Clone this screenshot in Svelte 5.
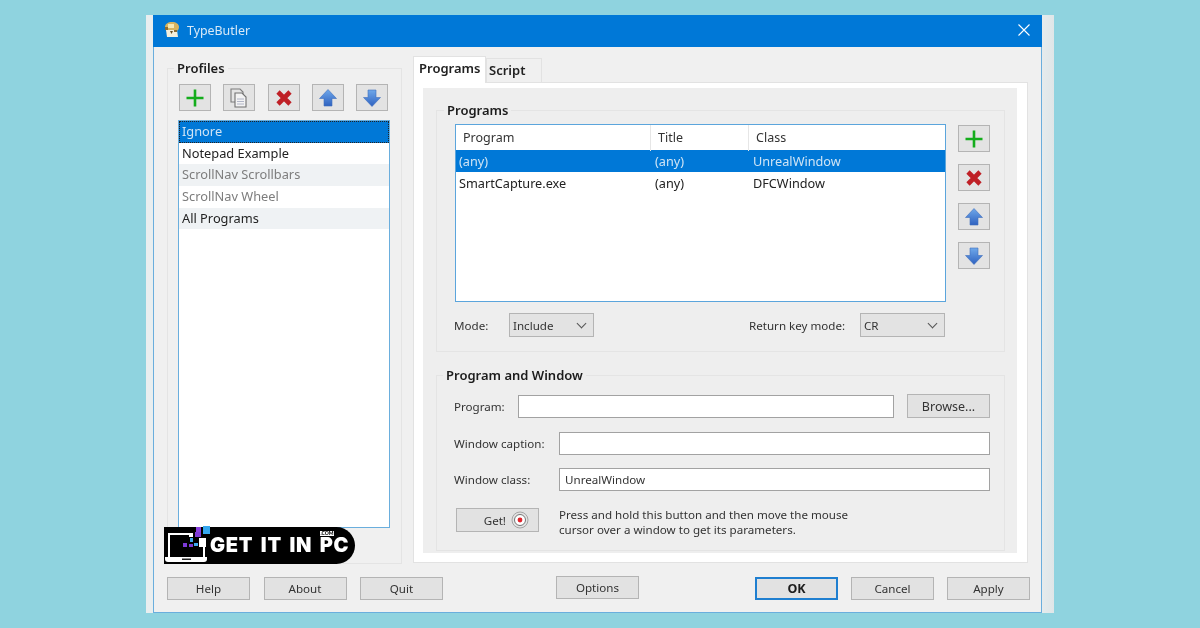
<script lang="ts">
  // TypeButler settings dialog
  const profiles = [
    { name: 'Ignore', state: 'selected' },
    { name: 'Notepad Example', state: '' },
    { name: 'ScrollNav Scrollbars', state: 'muted alt' },
    { name: 'ScrollNav Wheel', state: 'muted' },
    { name: 'All Programs', state: 'alt' }
  ];

  const programs = [
    { program: '(any)', title: '(any)', cls: 'UnrealWindow', selected: true },
    { program: 'SmartCapture.exe', title: '(any)', cls: 'DFCWindow', selected: false }
  ];

  const profileTools = ['add', 'copy', 'remove', 'up', 'down'];
  const programTools = ['add', 'remove', 'up', 'down'];
</script>

{#snippet icon(kind: string)}
  <svg class="icon" viewBox="0 0 20 20" aria-hidden="true">
    {#if kind === 'add'}
      <path d="M10 1.500v17M1.500 10h17" stroke="#14ad1c" stroke-width="2.600" fill="none" />
    {:else if kind === 'copy'}
      <path d="M2 1h9l3 3v10H2z" fill="#e4e4e4" stroke="#7c7c7c" stroke-width="1.100" />
      <path d="M6 5h7l4 4v10H6z" fill="#f3f3f3" stroke="#707070" stroke-width="1.100" />
      <path d="M8 11h7M8 13.500h7M8 16h7" stroke="#b0b4c6" />
    {:else if kind === 'remove'}
      <path d="M4 4l12 12M16 4L4 16" stroke="#bf2026" stroke-width="4.600" fill="none" />
    {:else if kind === 'up'}
      <path d="M10 1.500L18.500 10.500H14V18H6V10.500H1.500z" fill="url(#arrow-fill)" stroke="#3f6fbe" stroke-width=".6" stroke-linejoin="round" />
    {:else if kind === 'down'}
      <path d="M10 18.500L18.500 9.500H14V2H6v7.500H1.500z" fill="url(#arrow-fill)" stroke="#3f6fbe" stroke-width=".6" stroke-linejoin="round" />
    {/if}
  </svg>
{/snippet}

<svg class="defs" aria-hidden="true">
  <defs>
    <linearGradient id="arrow-fill" x1="0" y1="0" x2="0" y2="1">
      <stop offset="0" stop-color="#6fa8ea" />
      <stop offset="1" stop-color="#2f62c0" />
    </linearGradient>
  </defs>
</svg>

<div class="page">
  <div class="shell">
    <div class="window">
      <header class="titlebar">
        <svg class="app-icon" viewBox="0 0 18 18" aria-hidden="true">
          <path d="M2 6c0-3 3-5 7-5s7 2 7 5-2 4-3 4H5C3 10 2 8 2 6z" fill="#d8b45e" />
          <path d="M3 9h11l1 7H4z" fill="#f4eedc" />
          <path d="M5 3h6v4H5z" fill="#f6e9b4" />
          <path d="M2 6h3v3H2zM11 9h3v2h-3z" fill="#8b6b33" />
          <path d="M7 10h3l-1.500 3z" fill="#6b5228" />
        </svg>
        <span class="title">TypeButler</span>
        <svg class="close" viewBox="0 0 12 12" aria-hidden="true">
          <path d="M.5.500l11 11M11.500.500l-11 11" stroke="#fff" stroke-width="1.100" fill="none" />
        </svg>
      </header>

      <div class="body">
        <fieldset class="group profiles">
          <legend>Profiles</legend>
          <div class="toolbar">
            {#each profileTools as tool}
              <button type="button" class="tool">{@render icon(tool)}</button>
            {/each}
          </div>
          <ul class="list">
            {#each profiles as p}
              <li class={p.state}><span>{p.name}</span></li>
            {/each}
          </ul>
        </fieldset>

        <section class="tabs">
          <div class="tabstrip">
            <span class="tab active">Programs</span>
            <span class="tab">Script</span>
          </div>
          <div class="panel">
            <div class="panel-inner">
              <fieldset class="group programs">
                <legend>Programs</legend>
                <div class="table-row">
                  <div class="table">
                    <div class="row head">
                      <span>Program</span><span>Title</span><span>Class</span>
                    </div>
                    {#each programs as r}
                      <div class="row" class:selected={r.selected}>
                        <span>{r.program}</span><span>{r.title}</span><span>{r.cls}</span>
                      </div>
                    {/each}
                  </div>
                  <div class="side-tools">
                    {#each programTools as tool}
                      <button type="button" class="tool">{@render icon(tool)}</button>
                    {/each}
                  </div>
                </div>
                <div class="mode-row">
                  <span class="mode-label">Mode:</span>
                  <div class="select">Include<i class="chev"></i></div>
                  <span class="return-label">Return key mode:</span>
                  <div class="select">CR<i class="chev"></i></div>
                </div>
              </fieldset>

              <fieldset class="group pw">
                <legend>Program and Window</legend>
                <div class="field first">
                  <span class="short">Program:</span>
                  <div class="input grow"></div>
                  <button type="button" class="btn browse">Browse...</button>
                </div>
                <div class="field caption">
                  <span class="long">Window caption:</span>
                  <div class="input grow"></div>
                </div>
                <div class="field cls">
                  <span class="long">Window class:</span>
                  <div class="input grow">UnrealWindow</div>
                </div>
                <div class="field get">
                  <button type="button" class="btn get-btn">
                    Get!
                    <svg class="target" viewBox="0 0 18 18" aria-hidden="true">
                      <circle cx="9" cy="9" r="8" fill="none" stroke="#a5a5a5" />
                      <circle cx="9" cy="9" r="5.500" fill="#fff" stroke="#777" />
                      <circle cx="9" cy="9" r="2.400" fill="#e0242c" />
                    </svg>
                  </button>
                  <p class="hint">Press and hold this button and then move the mouse<br />cursor over a window to get its parameters.</p>
                </div>
              </fieldset>
            </div>
          </div>
        </section>

        <div class="badge">
          <i class="px blue"></i><i class="px purple"></i>
          <svg class="laptop" viewBox="0 0 43 30" aria-hidden="true">
            <path d="M3 1h22v2H5v22h33V15h2v11H3z" fill="#fff" />
            <path d="M0 25h42v2c0 2-1 3-3 3H3c-2 0-3-1-3-3z" fill="#fff" />
            <path d="M17 26.500h9v1.500h-9z" fill="#222" />
            <path d="M18 11h4v4h-4zM24 12h4v3h-4zM30 0h6v5h-6z" fill="#7c3ad6" />
            <path d="M25 6h3v4h-3zM29 11h4v3h-4z" fill="#3fa9ef" />
            <path d="M24 1h4v4h-4zM34 6h7v9h-7z" fill="#fff" />
          </svg>
          <span class="brand">GET IT IN PC</span>
          <span class="com">.COM</span>
        </div>
      </div>

      <footer class="footer">
        <div class="cluster left">
          <button type="button" class="btn">Help</button>
          <button type="button" class="btn">About</button>
          <button type="button" class="btn">Quit</button>
        </div>
        <button type="button" class="btn options">Options</button>
        <div class="cluster">
          <button type="button" class="btn ok">OK</button>
          <button type="button" class="btn">Cancel</button>
          <button type="button" class="btn">Apply</button>
        </div>
      </footer>
    </div>
  </div>
</div>

<style>
  :global(body) {
    margin: 0;
    background: #8fd3df;
  }

  .defs {
    position: absolute;
    width: 0;
    height: 0;
  }

  .page {
    height: 628px;
    box-sizing: border-box;
    padding: 15px 146px 0;
    font-family: 'Noto Sans', 'Open Sans', sans-serif;
    font-size: 11.6px;
    color: #333;
    overflow: hidden;
  }

  .shell {
    width: 908px;
    height: 598px;
    box-sizing: border-box;
    padding-left: 7px;
    background: linear-gradient(90deg, #e9eeef 0, #e9eeef 98%, #dfe6e8 100%);
  }

  .window {
    width: 889px;
    height: 598px;
    box-sizing: border-box;
    display: flex;
    flex-direction: column;
    background: #f0f0f0;
    border: 1px solid #6aaedd;
    border-top: 0;
    filter: blur(0.4px);
  }

  .titlebar {
    height: 32px;
    box-sizing: border-box;
    flex: none;
    display: flex;
    align-items: center;
    background: #0078d7;
    margin: 0 -1px;
    padding: 0 12px 2px 10px;
  }

  .app-icon {
    width: 18px;
    height: 18px;
    margin-right: 6px;
  }

  .title {
    font-size: 12.4px;
    color: #d8e9f7;
  }

  .close {
    width: 12px;
    height: 12px;
    margin-left: auto;
  }

  .body {
    position: relative;
    display: flex;
    gap: 11px;
    padding: 13px 13px 0;
    height: 517px;
    box-sizing: border-box;
  }

  .group {
    margin: 0;
    min-width: 0;
    box-sizing: border-box;
    border: 1px solid #e4e4e4;
  }

  legend {
    padding: 0 3px;
    margin-left: -11px;
    line-height: 16px;
    font-size: 13px;
    font-weight: 600;
    color: #1c1c1c;
  }

  .profiles {
    width: 235px;
    height: 504px;
    padding: 8px 12px 36px 10px;
  }

  .profiles legend {
    margin-left: -4px;
  }

  .toolbar {
    display: flex;
    justify-content: space-between;
    width: 209px;
    margin-left: 1px;
  }

  .tool {
    width: 32px;
    height: 27px;
    padding: 0;
    display: grid;
    place-items: center;
    background: #e3e3e3;
    border: 1px solid #b4b4b4;
  }

  .icon {
    width: 20px;
    height: 20px;
  }

  .list {
    list-style: none;
    margin: 9px 0 0;
    padding: 0;
    width: 212px;
    height: 408px;
    box-sizing: border-box;
    font-size: 12.8px;
    background: #fff;
    border: 1px solid #6aaedd;
  }

  .list li {
    height: 21.700px;
    line-height: 21px;
    padding-left: 3px;
    color: #222;
  }

  .list li.alt {
    background: #eff2f4;
  }

  .list li.muted {
    color: #7d7d7d;
  }

  .list li.selected {
    background: #0078d7;
    color: #cfe4f5;
    outline: 1px dotted #222;
    outline-offset: -1px;
  }

  .tabs {
    width: 615px;
    display: flex;
    flex-direction: column;
    margin-top: -4px;
  }

  .tabstrip {
    display: flex;
    align-items: flex-end;
    height: 26px;
    flex: none;
  }

  .tab {
    height: 24px;
    box-sizing: border-box;
    width: 56px;
    padding: 3px 0 0 2px;
    font-size: 13px;
    font-weight: 600;
    line-height: 16px;
    color: #222;
    background: #f0f0f0;
    border: 1px solid #e2e2e2;
    border-bottom: 0;
  }

  .tab.active {
    height: 27px;
    width: 73px;
    padding: 3px 0 0 5px;
    background: #fff;
    margin-bottom: -1px;
    position: relative;
  }

  .panel {
    height: 481px;
    box-sizing: border-box;
    padding: 5px 10px 9px 9px;
    background: #fff;
    border: 1px solid #e2e2e2;
  }

  .panel-inner {
    height: 100%;
    box-sizing: border-box;
    background: #eee;
    padding: 14px 12px 0 13px;
  }

  .programs {
    height: 250px;
    padding: 6px 14px 0 18px;
  }

  .table-row {
    display: flex;
    gap: 12px;
  }

  .table {
    width: 491px;
    height: 178px;
    box-sizing: border-box;
    font-size: 12.7px;
    background: #fff;
    border: 1px solid #5ba5dc;
  }

  .row {
    display: grid;
    grid-template-columns: 195px 98px 1fr;
    height: 22px;
    line-height: 23px;
    color: #222;
  }

  .row span {
    padding-left: 4px;
  }

  .row span:first-child {
    padding-left: 3px;
  }

  .row.head {
    height: 25px;
    line-height: 26px;
    font-size: 12.5px;
    color: #333;
  }

  .row.head span {
    padding-left: 7px;
    border-right: 1px solid #e6e6e6;
  }

  .row.head span:last-child {
    border-right: 0;
  }

  .row.selected {
    background: #0078d7;
    color: #cfe4f5;
  }

  .side-tools {
    display: flex;
    flex-direction: column;
    gap: 12px;
    padding-top: 1px;
  }

  .mode-row {
    display: flex;
    align-items: center;
    margin-top: 11px;
  }

  .mode-label {
    width: 55px;
    margin-left: -1px;
  }

  .return-label {
    margin-left: 155px;
    width: 111px;
  }

  .select {
    position: relative;
    width: 85px;
    height: 24px;
    box-sizing: border-box;
    padding-left: 3px;
    line-height: 23px;
    background: #e3e3e3;
    border: 1px solid #b4b4b4;
  }

  .chev {
    position: absolute;
    right: 8px;
    top: 6px;
    width: 6px;
    height: 6px;
    border-right: 1px solid #555;
    border-bottom: 1px solid #555;
    transform: rotate(45deg);
  }

  .pw {
    height: 184px;
    margin-top: 15px;
    padding: 11px 14px 0 17px;
  }

  .field {
    display: flex;
    align-items: center;
  }

  .short {
    width: 64px;
  }

  .long {
    width: 105px;
  }

  .caption {
    margin-top: 14px;
  }

  .cls {
    margin-top: 13px;
  }

  .get {
    margin-top: 17px;
    align-items: flex-start;
  }

  .input {
    height: 23px;
    box-sizing: border-box;
    padding-left: 5px;
    line-height: 22px;
    background: #fff;
    border: 1px solid #a2a2a2;
  }

  .grow {
    flex: 1;
  }

  .btn {
    width: 83px;
    height: 23px;
    padding: 0;
    font: inherit;
    color: #333;
    background: #e2e2e2;
    border: 1px solid #b4b4b4;
  }

  .browse {
    margin-left: 13px;
    height: 24px;
    font-size: 12.5px;
  }

  .get-btn {
    height: 24px;
    margin-left: 2px;
    display: flex;
    align-items: center;
    justify-content: flex-end;
    gap: 5px;
    padding-right: 9px;
  }

  .target {
    width: 18px;
    height: 18px;
  }

  .hint {
    margin: -1px 0 0 20px;
    line-height: 15px;
  }

  .footer {
    flex: none;
    display: flex;
    justify-content: space-between;
    padding: 13px 11px 0 13px;
  }

  .cluster {
    display: flex;
    gap: 13px;
  }

  .cluster.left {
    gap: 13.500px;
  }

  .options {
    margin-top: -1px;
    margin-right: 3px;
  }

  .ok {
    font-size: 12.5px;
    font-weight: 700;
    color: #1c1c1c;
    border: 2px solid #1f7fd0;
  }

  .badge {
    position: absolute;
    left: 10px;
    top: 480px;
    width: 191px;
    height: 37px;
    background: #000;
    border-radius: 0 19px 19px 0;
  }

  .px {
    position: absolute;
  }

  .px.blue {
    left: 39px;
    top: -1px;
    width: 7px;
    height: 8px;
    background: #35a7ef;
  }

  .px.purple {
    left: 32px;
    top: 0;
    width: 5px;
    height: 6px;
    background: #8a3fe0;
  }

  .laptop {
    position: absolute;
    left: 1px;
    top: 5px;
    width: 43px;
    height: 30px;
  }

  .brand {
    position: absolute;
    left: 46px;
    top: 11px;
    font-family: Inter, Lato, sans-serif;
    font-size: 20px;
    line-height: 15px;
    font-weight: 900;
    letter-spacing: 0.7px;
    word-spacing: 3px;
    color: #fff;
    white-space: nowrap;
  }

  .com {
    position: absolute;
    left: 156px;
    top: 4px;
    width: 14px;
    height: 5px;
    background: #fff;
    color: #000;
    font-family: Lato, sans-serif;
    font-size: 5px;
    font-weight: 900;
    line-height: 5px;
    text-align: center;
  }
</style>
